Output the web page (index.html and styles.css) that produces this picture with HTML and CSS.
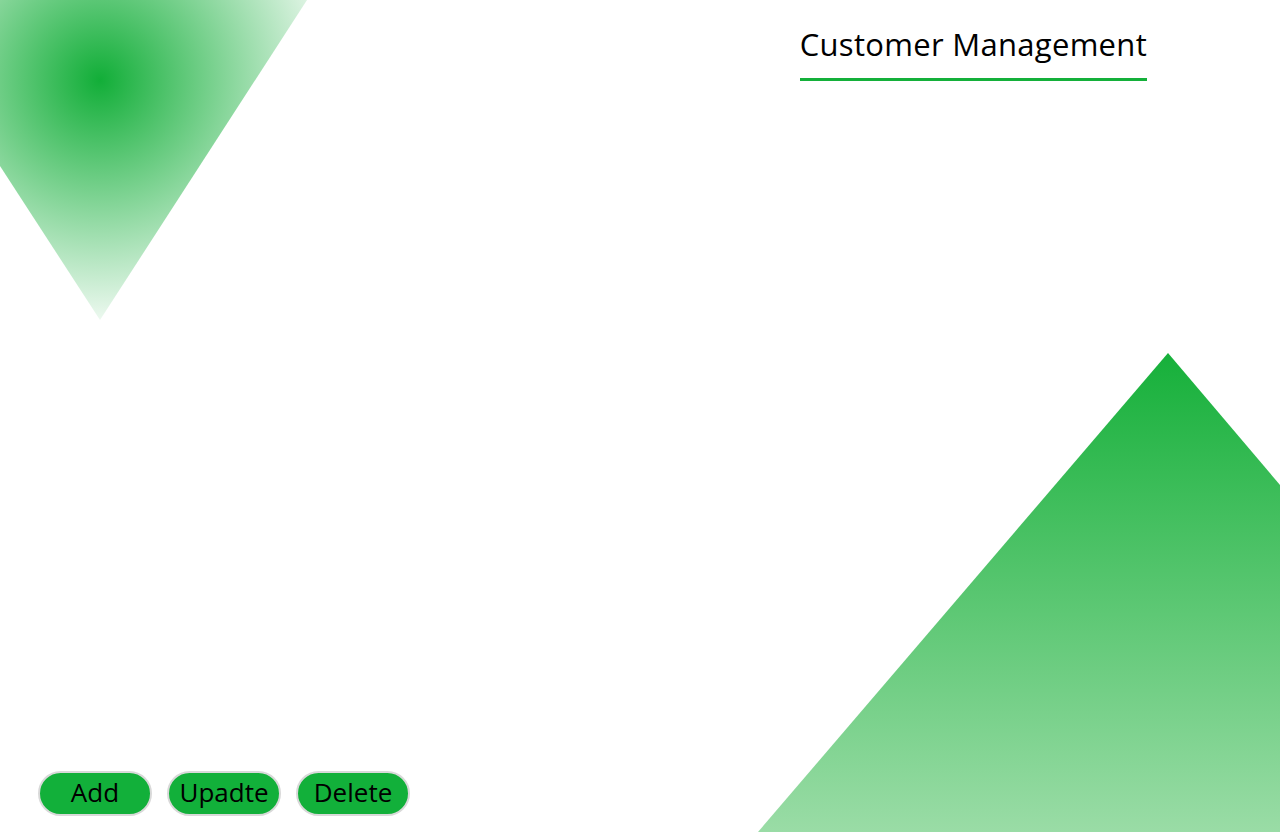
FILE: index.html
```html
<!DOCTYPE html>
<html lang="en">
<head>
<meta charset="utf-8">
<title>Customer Management</title>
<link rel="stylesheet" href="styles.css">
</head>
<body>
<div class="deco deco-top"></div>
<div class="deco deco-bottom"></div>
<main class="page">
  <header class="header">
    <h1 class="title">Customer Management</h1>
  </header>
  <div class="actions">
    <button class="btn" type="button">Add</button>
    <button class="btn" type="button">Upadte</button>
    <button class="btn" type="button">Delete</button>
  </div>
</main>
</body>
</html>
```
FILE: styles.css
```css
html, body {
  margin: 0;
  padding: 0;
  height: 100%;
  overflow: hidden;
  background: #ffffff;
}
body {
  font-family: "Open Sans", "DejaVu Sans", sans-serif;
  color: #000;
  position: relative;
}
.deco {
  position: absolute;
  pointer-events: none;
}
.deco-top {
  left: 0;
  top: 0;
  width: 307px;
  height: 320px;
  clip-path: polygon(0 0, 307px 0, 100px 320px, 0 166px);
  background: radial-gradient(circle at 100px 80px, rgba(18, 174, 56, 1) 0, rgba(18, 174, 56, 0) 260px);
}
.deco-bottom {
  right: 0;
  bottom: 0;
  width: 522px;
  height: 479px;
  clip-path: polygon(410px 0, 522px 132px, 522px 100%, 0 100%);
  background: linear-gradient(to bottom, #16b03a 0%, #9adca6 100%);
}
.page {
  position: relative;
  height: 100%;
  box-sizing: border-box;
  display: flex;
  flex-direction: column;
  justify-content: space-between;
  padding: 0 0 16px 38px;
}
.header {
  display: flex;
  justify-content: flex-end;
  padding-right: 133px;
}
.title {
  margin: 24px 0 0;
  font-size: 31px;
  font-weight: 400;
  line-height: 40px;
  padding-bottom: 14px;
  border-bottom: 3px solid #14b03a;
  letter-spacing: 0.3px;
}
.actions {
  display: flex;
  gap: 15px;
}
.btn {
  width: 114px;
  height: 45px;
  box-sizing: border-box;
  border: 2px solid #d9d9d9;
  border-radius: 23px;
  background: #12b03a;
  color: #000;
  font-family: inherit;
  font-size: 26px;
  line-height: 1;
  padding: 0 0 3px;
  cursor: pointer;
}
```
